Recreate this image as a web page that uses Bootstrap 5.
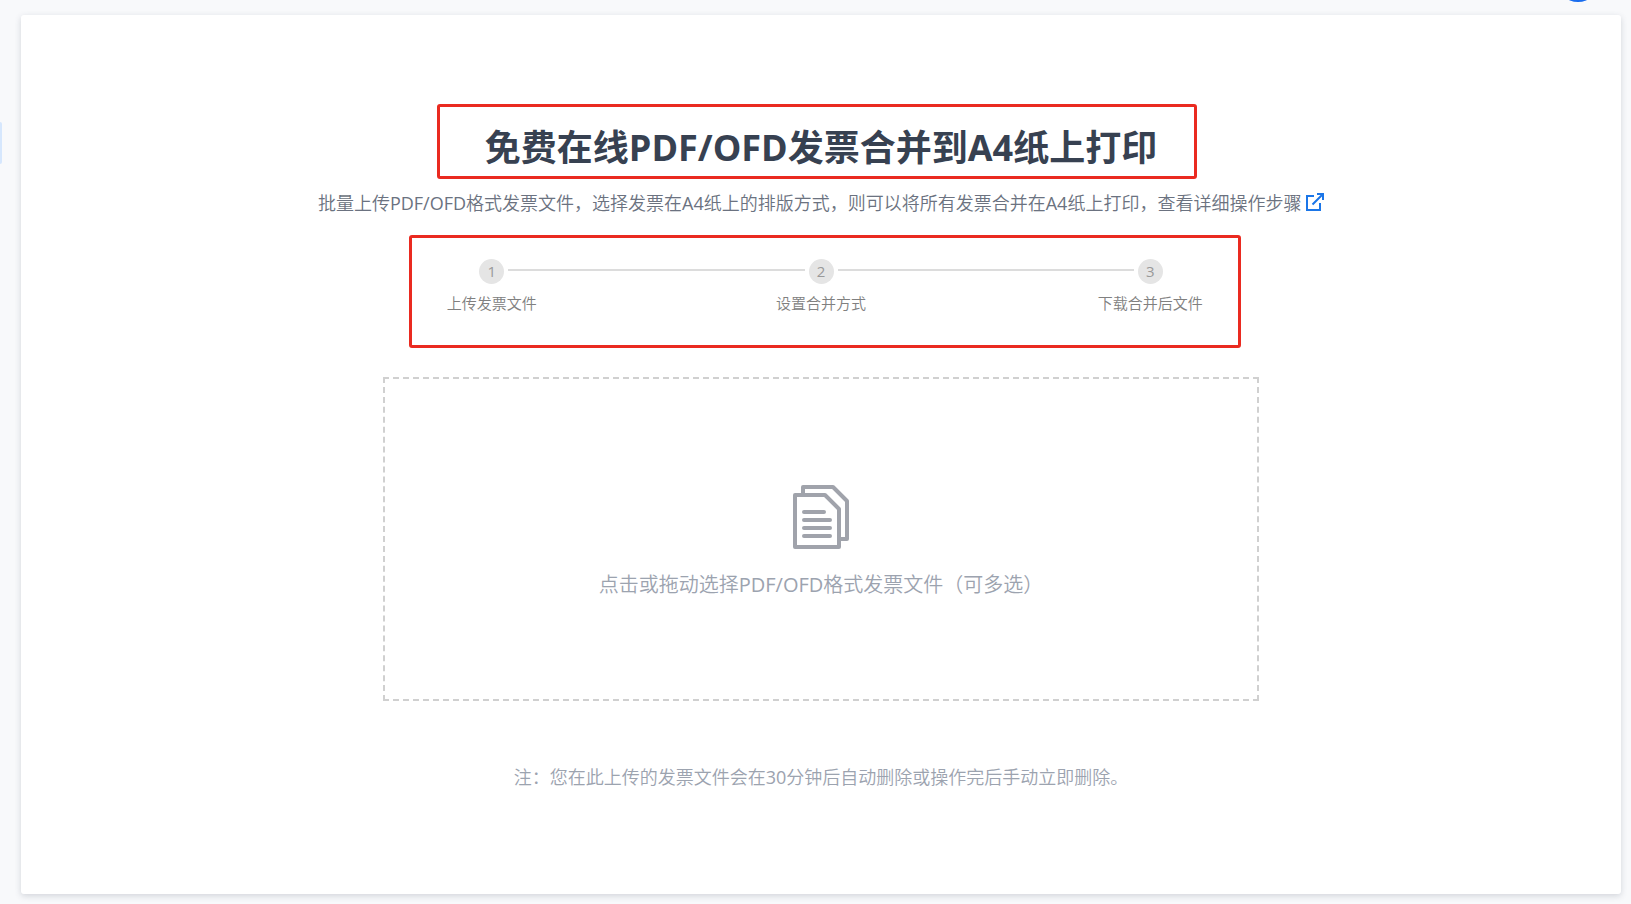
<!DOCTYPE html>
<html lang="zh-CN">
<head>
<meta charset="utf-8">
<meta name="viewport" content="width=device-width, initial-scale=1">
<title>发票合并打印</title>
<link href="https://cdn.jsdelivr.net/npm/bootstrap@5.3.0/dist/css/bootstrap.min.css" rel="stylesheet">
<style>
  body {
    background: #f8f9fb;
    font-family: "Open Sans", "Noto Sans CJK SC", sans-serif;
    font-weight: 350;
    overflow-x: hidden;
  }
  .latin { font-weight: 400; }
  .page-shell { padding: 15px 10px 10px 21px; min-height: 100vh; }
  .panel {
    background: #fff;
    border-radius: 3px;
    box-shadow: 0 2px 6px rgba(60, 70, 90, .2);
    padding-top: 113px;
  }
  .avatar-edge {
    position: absolute; right: 32px; top: -40px;
    width: 42px; height: 42px; background: #1a6dee;
  }
  .nav-edge {
    position: absolute; left: 0; top: 122px;
    width: 2px; height: 42px; background: #d6e7fd; border-radius: 0 2px 2px 0;
  }
  .page-title { font-size: 36px; line-height: 40px; font-weight: 700; color: #374151; }
  .page-intro { font-size: 18px; line-height: 28px; color: #6b7280; margin-top: 21px; }
  .page-intro a { color: inherit; }
  .outline-mark {
    position: absolute; border: 3px solid #ea2a20; border-radius: 3px; pointer-events: none;
  }
  .mark-title { inset: -24px -40px -11px -48px; }
  .mark-steps { inset: -24px 74px -34px 82px; }
  .steps { width: 988px; max-width: 100%; margin-top: 42px; }
  .step-gap, .step-line { flex: 1 1 0; height: 2px; }
  .step-line { background: #dcdcdc; margin-bottom: 4px; }
  .step-dot {
    width: 25px; height: 25px; background: #e5e5e5; color: #999;
    font-size: 15px; line-height: 25px; margin: 0 4px;
  }
  .step-label { font-size: 15px; line-height: 22px; color: #808080; margin-top: 8px; }
  .dropzone {
    width: 876px; max-width: 100%; min-height: 324px; margin-top: 63px;
    background: #fff; border: 2px dashed #d0d0d0; color: #9ca3af; font-weight: inherit;
    font-size: 20px; line-height: 28px; padding-top: 7px;
  }
  .dropzone-text { margin-top: 22px; }
  .note { font-size: 18px; line-height: 28px; color: #9ca3af; margin-top: 62px; }
</style>
</head>
<body>
<div class="avatar-edge rounded-circle"></div>
<div class="nav-edge"></div>
<div class="page-shell d-flex">
  <main class="panel flex-grow-1 d-flex flex-column align-items-center text-center">
    <div class="position-relative">
      <h1 class="page-title mb-0">免费在线PDF/OFD发票合并到A4纸上打印</h1>
      <div class="outline-mark mark-title"></div>
    </div>
    <p class="page-intro mb-0">批量上传<span class="latin">PDF/OFD</span>格式发票文件，选择发票在<span class="latin">A4</span>纸上的排版方式，则可以将所有发票合并在<span class="latin">A4</span>纸上打印，<a href="#" class="text-decoration-none">查看详细操作步骤
      <svg width="18" height="18" viewBox="0 0 18 18" fill="none" stroke="#1b76e8" stroke-width="2" class="align-text-bottom mb-1" aria-hidden="true"><path d="M8 3H1v14h13v-7M6.500 11.500 16.500 1.500M11 1h6v6"/></svg></a></p>

    <div class="steps position-relative">
      <ol class="list-unstyled d-flex mb-0">
        <li class="w-100">
          <div class="d-flex align-items-center"><span class="step-gap"></span><span class="step-dot latin rounded-circle">1</span><span class="step-line"></span></div>
          <div class="step-label">上传发票文件</div>
        </li>
        <li class="w-100">
          <div class="d-flex align-items-center"><span class="step-line"></span><span class="step-dot latin rounded-circle">2</span><span class="step-line"></span></div>
          <div class="step-label">设置合并方式</div>
        </li>
        <li class="w-100">
          <div class="d-flex align-items-center"><span class="step-line"></span><span class="step-dot latin rounded-circle">3</span><span class="step-gap"></span></div>
          <div class="step-label">下载合并后文件</div>
        </li>
      </ol>
      <div class="outline-mark mark-steps"></div>
    </div>

    <button type="button" class="dropzone d-flex flex-column align-items-center justify-content-center">
      <svg width="56" height="64" viewBox="0 0 56 64" fill="none" stroke="#a0a3ab" stroke-width="4" stroke-linejoin="round" aria-hidden="true">
        <path d="M10 9V2h30l14 14v38h-8"/>
        <path d="M2 10h30l14 14v38H2z"/>
        <path d="M11 27h20M11 35h26M11 43h26M11 51h26" stroke-linecap="round" stroke-width="4"/>
      </svg>
      <span class="dropzone-text">点击或拖动选择<span class="latin">PDF/OFD</span>格式发票文件（可多选）</span>
    </button>

    <p class="note mb-0">注：您在此上传的发票文件会在<span class="latin">30</span>分钟后自动删除或操作完后手动立即删除。</p>
  </main>
</div>
<script src="https://cdn.jsdelivr.net/npm/bootstrap@5.3.0/dist/js/bootstrap.bundle.min.js"></script>
</body>
</html>
